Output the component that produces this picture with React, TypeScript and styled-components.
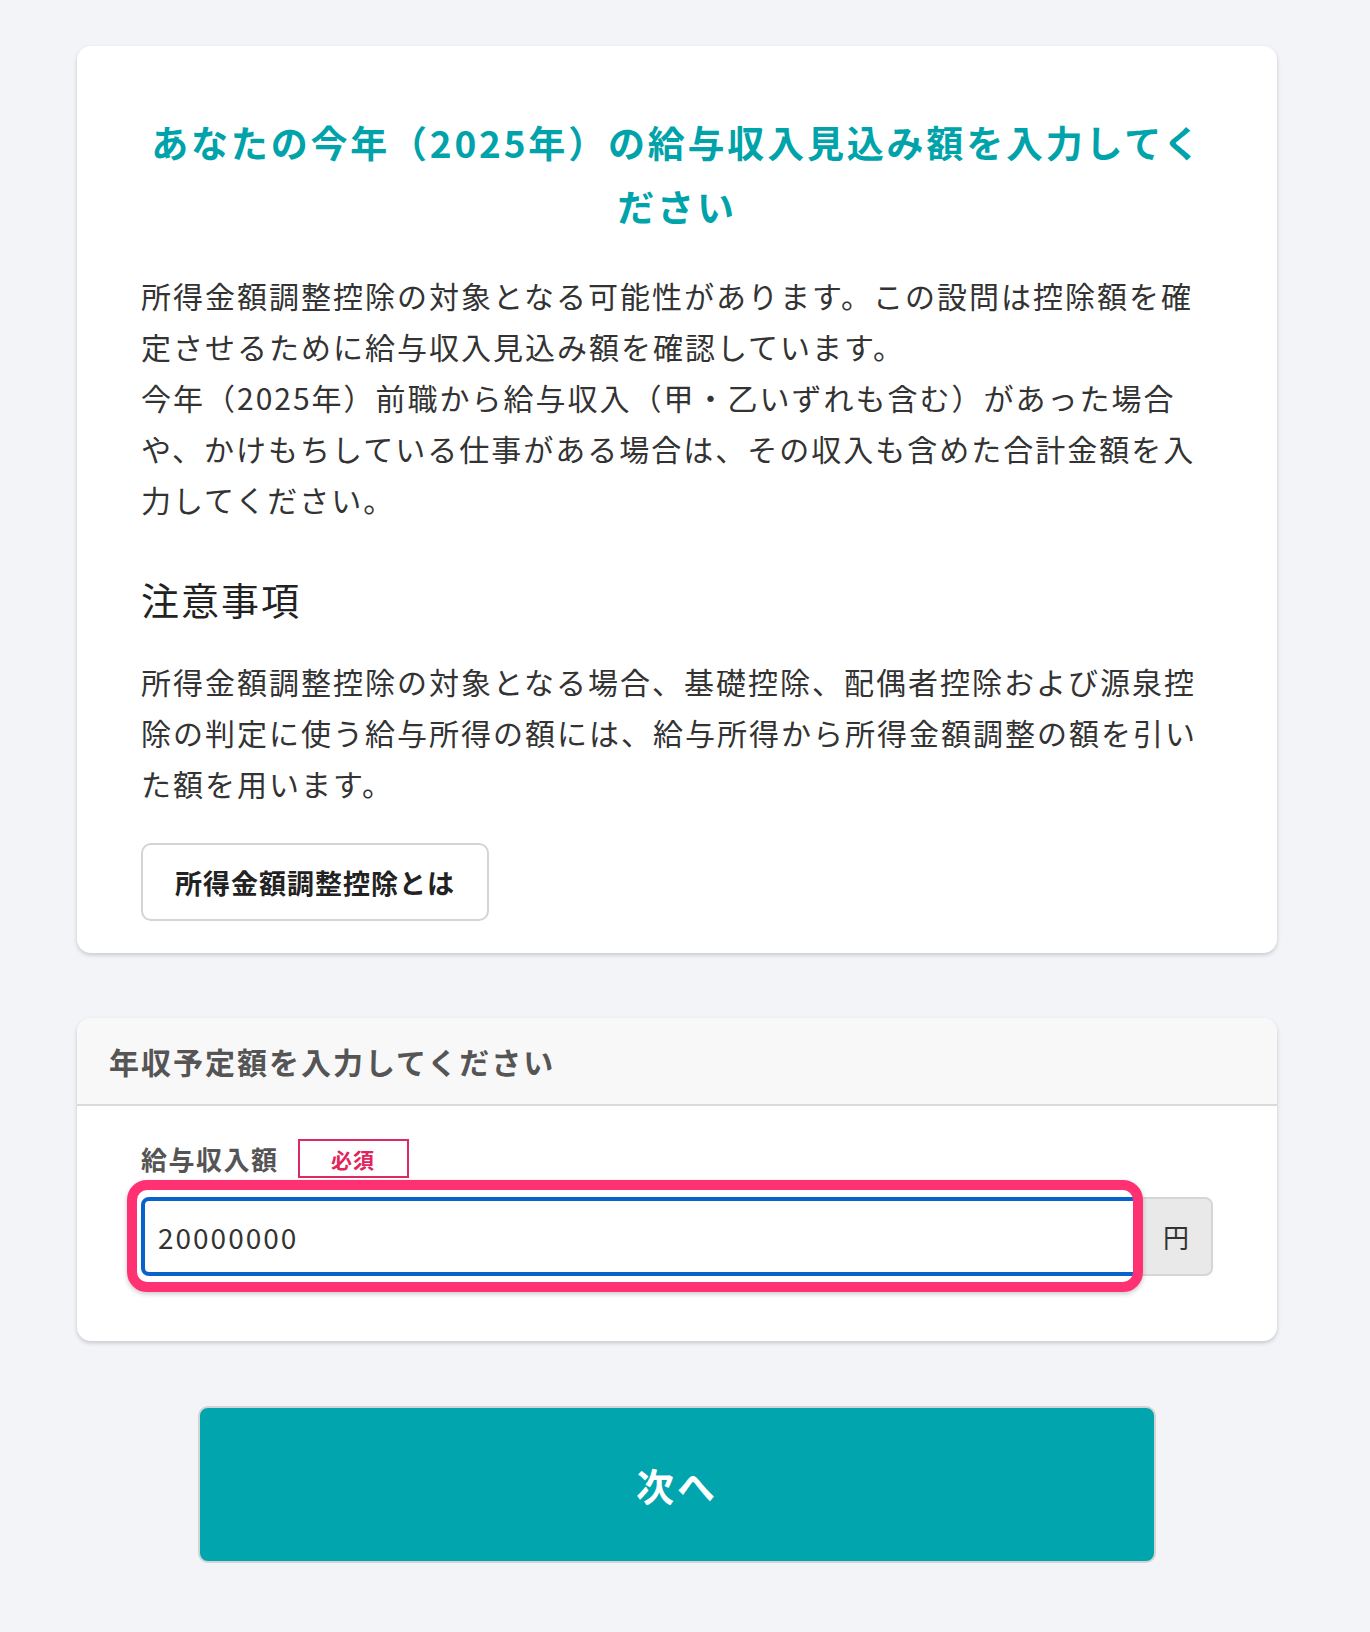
import React from "react";
import styled, { createGlobalStyle } from "styled-components";

const GlobalStyle = createGlobalStyle`
  html, body {
    margin: 0;
    padding: 0;
    background: #f3f4f8;
  }
  body {
    font-family: "Noto Sans CJK JP", "Noto Sans", sans-serif;
    color: #333;
  }
  * {
    box-sizing: border-box;
  }
`;

const Page = styled.div`
  min-height: 1632px;
  padding: 46px 16px 67px 0;
`;

const Column = styled.div`
  width: 1200px;
  margin: 0 auto;
  display: flex;
  flex-direction: column;
`;

const Card = styled.section`
  background: #fff;
  border-radius: 14px;
  box-shadow: 0 2px 4px rgba(0, 0, 0, 0.18);
`;

const IntroCard = styled(Card)`
  padding: 64px 64px 32px;
`;

const Title = styled.h1`
  margin: 0;
  text-align: center;
  font-size: 37px;
  font-weight: 700;
  letter-spacing: 2.8px;
  line-height: 64px;
  color: #00a3aa;
`;

const Text = styled.p<{ $top?: number }>`
  margin: ${(p) => p.$top ?? 0}px 0 0;
  font-size: 30px;
  letter-spacing: 2px;
  line-height: 51px;
  color: #333;
`;

const Heading = styled.h2`
  margin: 47px 0 30px;
  font-size: 38px;
  font-weight: 400;
  letter-spacing: 2px;
  line-height: 54px;
  color: #222;
`;

const LinkButton = styled.button`
  margin-top: 34px;
  height: 78px;
  padding: 0 32px;
  background: #fff;
  border: 2px solid #d6d3d0;
  border-radius: 10px;
  font-family: inherit;
  font-size: 27px;
  font-weight: 700;
  letter-spacing: 1px;
  color: #222;
`;

const FormCard = styled(Card)`
  margin-top: 65px;
`;

const FormHeader = styled.div`
  height: 88px;
  padding: 0 32px;
  display: flex;
  align-items: center;
  background: #f8f8f8;
  border-bottom: 2px solid #dadada;
  border-radius: 14px 14px 0 0;
  font-size: 30px;
  font-weight: 700;
  letter-spacing: 2px;
  color: #555;
`;

const FormBody = styled.div`
  padding: 33px 64px 65px;
`;

const LabelRow = styled.div`
  display: flex;
  align-items: center;
  height: 39px;
`;

const Label = styled.label`
  font-size: 26px;
  font-weight: 700;
  letter-spacing: 1.5px;
  color: #555;
`;

const RequiredBadge = styled.span`
  margin-left: 19px;
  width: 111px;
  height: 39px;
  display: flex;
  align-items: center;
  justify-content: center;
  border: 2px solid #dd2a62;
  font-size: 21px;
  font-weight: 700;
  letter-spacing: 1px;
  color: #e0245e;
`;

const InputGroup = styled.div`
  margin-top: 19px;
  display: flex;
  height: 79px;
`;

const InputBox = styled.div`
  position: relative;
  flex: 1;
`;

const AmountInput = styled.input`
  width: 100%;
  height: 100%;
  padding: 0 13px;
  border: 4px solid #0862cc;
  border-radius: 8px 0 0 8px;
  outline: none;
  font-family: inherit;
  font-size: 28px;
  letter-spacing: 2px;
  color: #333;
  background: #fff;
`;

const HighlightRing = styled.span`
  position: absolute;
  top: -17px;
  left: -14px;
  right: -2px;
  bottom: -16px;
  border: 10px solid #ff3172;
  border-radius: 20px;
  box-shadow: 0 2px 5px rgba(0, 0, 0, 0.22);
  pointer-events: none;
`;

const Addon = styled.span`
  width: 72px;
  display: flex;
  align-items: center;
  justify-content: center;
  background: #e9e9e9;
  border: 2px solid #d6d6d6;
  border-left: none;
  border-radius: 0 8px 8px 0;
  font-size: 26px;
  color: #333;
`;

const NextButton = styled.button`
  margin: 65px auto 0;
  width: 958px;
  height: 157px;
  background: #00a5ad;
  border: 2px solid #d3d3d3;
  border-radius: 10px;
  font-family: inherit;
  font-size: 38px;
  font-weight: 700;
  letter-spacing: 3px;
  color: #fff;
`;

export default function App() {
  return (
    <Page>
      <GlobalStyle />
      <Column>
        <IntroCard>
          <Title>あなたの今年（2025年）の給与収入見込み額を入力してください</Title>
          <Text $top={32}>
            所得金額調整控除の対象となる可能性があります。この設問は控除額を確定させるために給与収入見込み額を確認しています。
            <br />
            今年（2025年）前職から給与収入（甲・乙いずれも含む）があった場合や、かけもちしている仕事がある場合は、その収入も含めた合計金額を入力してください。
          </Text>
          <Heading>注意事項</Heading>
          <Text>
            所得金額調整控除の対象となる場合、基礎控除、配偶者控除および源泉控除の判定に使う給与所得の額には、給与所得から所得金額調整の額を引いた額を用います。
          </Text>
          <LinkButton type="button">所得金額調整控除とは</LinkButton>
        </IntroCard>

        <FormCard>
          <FormHeader>年収予定額を入力してください</FormHeader>
          <FormBody>
            <LabelRow>
              <Label htmlFor="salary">給与収入額</Label>
              <RequiredBadge>必須</RequiredBadge>
            </LabelRow>
            <InputGroup>
              <InputBox>
                <AmountInput id="salary" defaultValue="20000000" />
                <HighlightRing />
              </InputBox>
              <Addon>円</Addon>
            </InputGroup>
          </FormBody>
        </FormCard>

        <NextButton type="button">次へ</NextButton>
      </Column>
    </Page>
  );
}
